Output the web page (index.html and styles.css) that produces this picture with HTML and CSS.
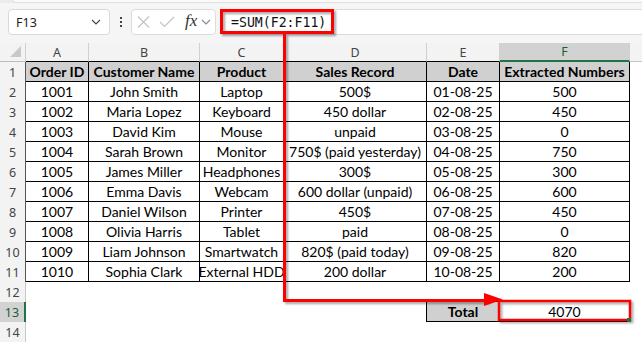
FILE: index.html
```html
<!DOCTYPE html>
<html>
<head>
<meta charset="utf-8">
<link rel="stylesheet" href="styles.css">
</head>
<body>
<div class="app">
  <div class="ribbon-edge"><div class="ribbon-inner"></div></div>
  <div class="fbar">
    <div class="namebox">
      <span class="nb-text">F13</span>
      <svg class="chev" width="10" height="6" viewBox="0 0 10 6"><path d="M1 1 L5 5 L9 1" fill="none" stroke="#444" stroke-width="1.2"/></svg>
    </div>
    <div class="vdots"><i></i><i></i><i></i></div>
    <div class="fnbox">
      <svg width="13" height="12" viewBox="0 0 13 12"><path d="M1 0.5 L12 11.5 M12 0.5 L1 11.5" stroke="#c4c4c4" stroke-width="1.2" fill="none"/></svg>
      <svg width="16" height="12" viewBox="0 0 16 12"><path d="M1 6 L5.5 10.5 L15 1" stroke="#c4c4c4" stroke-width="1.2" fill="none"/></svg>
      <span class="fx">fx</span>
      <svg class="chev2" width="10" height="6" viewBox="0 0 10 6"><path d="M1 1 L5 5 L9 1" fill="none" stroke="#888" stroke-width="1.1"/></svg>
    </div>
    <div class="formula">=SUM(F2:F11)</div>
  </div>

  <div class="sheet">
    <div class="corner"><span class="tri"></span></div>
    <div class="ch">A</div><div class="ch">B</div><div class="ch">C</div><div class="ch">D</div><div class="ch">E</div><div class="ch sel">F</div><div class="ch end"></div>

    <div class="rh t">1</div>
    <div class="c t h">Order ID</div><div class="c t h">Customer Name</div><div class="c t h">Product</div><div class="c t h">Sales Record</div><div class="c t h">Date</div><div class="c t h">Extracted Numbers</div><div class="c"></div>

    <div class="rh t">2</div>
    <div class="c t">1001</div><div class="c t">John Smith</div><div class="c t">Laptop</div><div class="c t">500$</div><div class="c t">01-08-25</div><div class="c t">500</div><div class="c"></div>

    <div class="rh t">3</div>
    <div class="c t">1002</div><div class="c t">Maria Lopez</div><div class="c t">Keyboard</div><div class="c t">450 dollar</div><div class="c t">02-08-25</div><div class="c t">450</div><div class="c"></div>

    <div class="rh t">4</div>
    <div class="c t">1003</div><div class="c t">David Kim</div><div class="c t">Mouse</div><div class="c t">unpaid</div><div class="c t">03-08-25</div><div class="c t">0</div><div class="c"></div>

    <div class="rh t">5</div>
    <div class="c t">1004</div><div class="c t">Sarah Brown</div><div class="c t">Monitor</div><div class="c t">750$ (paid yesterday)</div><div class="c t">04-08-25</div><div class="c t">750</div><div class="c"></div>

    <div class="rh t">6</div>
    <div class="c t">1005</div><div class="c t">James Miller</div><div class="c t">Headphones</div><div class="c t">300$</div><div class="c t">05-08-25</div><div class="c t">300</div><div class="c"></div>

    <div class="rh t">7</div>
    <div class="c t">1006</div><div class="c t">Emma Davis</div><div class="c t">Webcam</div><div class="c t">600 dollar (unpaid)</div><div class="c t">06-08-25</div><div class="c t">600</div><div class="c"></div>

    <div class="rh t">8</div>
    <div class="c t">1007</div><div class="c t">Daniel Wilson</div><div class="c t">Printer</div><div class="c t">450$</div><div class="c t">07-08-25</div><div class="c t">450</div><div class="c"></div>

    <div class="rh t">9</div>
    <div class="c t">1008</div><div class="c t">Olivia Harris</div><div class="c t">Tablet</div><div class="c t">paid</div><div class="c t">08-08-25</div><div class="c t">0</div><div class="c"></div>

    <div class="rh t">10</div>
    <div class="c t">1009</div><div class="c t">Liam Johnson</div><div class="c t">Smartwatch</div><div class="c t">820$ (paid today)</div><div class="c t">09-08-25</div><div class="c t">820</div><div class="c"></div>

    <div class="rh t">11</div>
    <div class="c t">1010</div><div class="c t">Sophia Clark</div><div class="c t">External HDD</div><div class="c t">200 dollar</div><div class="c t">10-08-25</div><div class="c t">200</div><div class="c"></div>

    <div class="rh">12</div>
    <div class="c"></div><div class="c"></div><div class="c"></div><div class="c"></div><div class="c bb"></div><div class="c bb"></div><div class="c"></div>

    <div class="rh sel">13</div>
    <div class="c"></div><div class="c"></div><div class="c"></div><div class="c br"></div><div class="c t h">Total</div><div class="c t">4070</div><div class="c"></div>

    <div class="rh">14</div>
    <div class="c"></div><div class="c"></div><div class="c"></div><div class="c"></div><div class="c"></div><div class="c"></div><div class="c"></div>
  </div>

  <svg class="annot" width="642" height="342" viewBox="0 0 642 342">
    <defs>
      <filter id="sh" x="-10%" y="-10%" width="130%" height="130%">
        <feGaussianBlur stdDeviation="1.2"/>
      </filter>
    </defs>
    <g filter="url(#sh)" opacity="0.35" transform="translate(2,2)">
      <rect x="221.5" y="10.5" width="111" height="22" fill="none" stroke="#000" stroke-width="3"/>
      <path d="M284.5 33 V300.5 H488" fill="none" stroke="#000" stroke-width="3"/>
      <rect x="499" y="301" width="131" height="19" fill="none" stroke="#000" stroke-width="2.5"/>
    </g>
    <rect x="221.5" y="10.5" width="111" height="22" fill="none" stroke="#f00" stroke-width="3"/>
    <path d="M284.5 33 V300.5 H488" fill="none" stroke="#f00" stroke-width="3"/>
    <polygon points="484,293 503,299.5 484,306" fill="#f00"/>
    <rect x="499" y="301" width="131" height="19" fill="none" stroke="#f00" stroke-width="2.5"/>
    <rect x="627" y="318" width="4" height="4" fill="#217346"/>
  </svg>
</div>
</body>
</html>
```

FILE: styles.css
```css
* { box-sizing: border-box; }
html, body { margin: 0; padding: 0; }
body {
  width: 642px;
  height: 342px;
  overflow: hidden;
  background: #f5f5f5;
  font-family: "Lato", "Noto Sans", sans-serif;
}
.app {
  position: relative;
  width: 642px;
  height: 342px;
  overflow: hidden;
}
.ribbon-edge {
  height: 3px;
  background: #ececec;
  display: flex;
}
.ribbon-inner {
  margin-left: 12px;
  flex: 1;
  background: #fafafa;
  border-bottom: 1px solid #e0e0e0;
  border-left: 1px solid #e0e0e0;
  border-bottom-left-radius: 4px;
}
.fbar {
  height: 40px;
  display: flex;
  align-items: flex-start;
  padding: 6px 0 0 8px;
  background: #f5f5f5;
}
.namebox {
  width: 102px;
  height: 26px;
  background: #fff;
  border: 1px solid #d9d9d9;
  border-radius: 4px;
  display: flex;
  align-items: center;
  justify-content: space-between;
  padding: 0 8px 0 7px;
  font-family: "Noto Sans", "Open Sans", sans-serif;
  font-size: 12.5px;
  color: #222;
}
.nb-text { padding-top: 1px; }
.vdots {
  width: 21px;
  height: 26px;
  display: flex;
  flex-direction: column;
  align-items: center;
  justify-content: center;
  gap: 2px;
}
.vdots i {
  display: block;
  width: 2px;
  height: 2px;
  background: #444;
}
.fnbox {
  width: 85px;
  height: 26px;
  background: #fff;
  border: 1px solid #dcdcdc;
  border-radius: 4px;
  display: flex;
  align-items: center;
  padding: 0 0 0 5px;
  gap: 9px;
}
.fx {
  font-family: "Liberation Serif", "DejaVu Serif", serif;
  font-style: italic;
  font-size: 17px;
  color: #333;
  margin-left: 1px;
  margin-top: -2px;
}
.chev2 { margin-left: -5px; }
.formula {
  flex: 1;
  height: 26px;
  margin-left: 4px;
  background: #fff;
  border: 1px solid #dcdcdc;
  border-right: none;
  border-radius: 4px 0 0 4px;
  padding: 0 0 0 10px;
  display: flex;
  align-items: center;
  font-family: "DejaVu Sans Mono", "Liberation Mono", monospace;
  font-size: 13.2px;
  color: #111;
}

.sheet {
  display: grid;
  grid-template-columns: 26px 63px 111px 84px 143px 73px 130px 1fr;
  grid-template-rows: 19px repeat(14, 20px);
  background: #fff;
}
.corner {
  background: #f3f3f3;
  border-right: 1px solid #cfcfcf;
  border-bottom: 1px solid #bdbdbd;
  display: flex;
  align-items: flex-end;
  justify-content: flex-end;
  padding: 0 4px 4px 0;
}
.tri {
  width: 0;
  height: 0;
  border-left: 11px solid transparent;
  border-bottom: 11px solid #c8c8c8;
}
.ch {
  background: #f3f3f3;
  border-right: 1px solid #d0d0d0;
  border-bottom: 1px solid #000;
  display: flex;
  align-items: center;
  justify-content: center;
  font-family: "Noto Sans", "Open Sans", sans-serif;
  font-size: 12.5px;
  color: #444;
}
.ch.sel {
  background: #d2d2d2;
  color: #1b5e37;
  border-bottom: 2px solid #217346;
}
.ch.end {
  border-right: none;
  border-bottom-color: #c8c8c8;
}
.rh {
  background: #f3f3f3;
  border-right: 1px solid #c8c8c8;
  display: flex;
  align-items: center;
  justify-content: center;
  font-family: "Noto Sans", "Open Sans", sans-serif;
  font-size: 12.5px;
  color: #444;
}
.rh.t { border-right-color: #555; }
.rh.sel {
  background: #d2d2d2;
  color: #1b5e37;
  border-right: 2px solid #217346;
}
.c {
  display: flex;
  align-items: center;
  justify-content: center;
  font-size: 14px;
  color: #000;
  white-space: nowrap;
  overflow: visible;
}
.c.t {
  border-right: 1px solid #000;
  border-bottom: 1px solid #000;
}
.c.h {
  background: #d0d0d0;
  font-weight: 700;
}
.c.bb { border-bottom: 1px solid #000; }
.c.br { border-right: 1px solid #000; }

.annot {
  position: absolute;
  left: 0;
  top: 0;
  pointer-events: none;
}
```
